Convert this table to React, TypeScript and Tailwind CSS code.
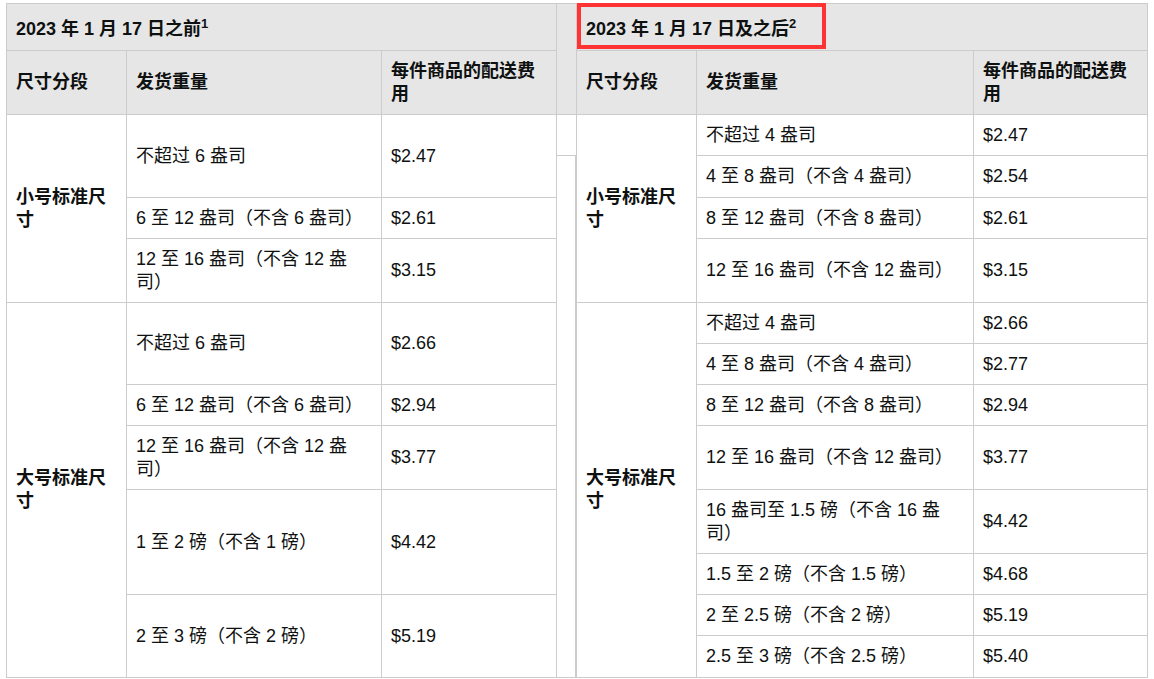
type Row = { weight: string; fee: string; h: number };
type Group = { name: string; rows: Row[] };

const font = { fontFamily: '"Liberation Sans", Arial, "Noto Sans CJK SC", sans-serif' };

const before: Group[] = [
  {
    name: "小号标准尺寸",
    rows: [
      { weight: "不超过 6 盎司", fee: "$2.47", h: 83 },
      { weight: "6 至 12 盎司（不含 6 盎司）", fee: "$2.61", h: 41 },
      { weight: "12 至 16 盎司（不含 12 盎司）", fee: "$3.15", h: 64 },
    ],
  },
  {
    name: "大号标准尺寸",
    rows: [
      { weight: "不超过 6 盎司", fee: "$2.66", h: 82 },
      { weight: "6 至 12 盎司（不含 6 盎司）", fee: "$2.94", h: 41 },
      { weight: "12 至 16 盎司（不含 12 盎司）", fee: "$3.77", h: 64 },
      { weight: "1 至 2 磅（不含 1 磅）", fee: "$4.42", h: 105 },
      { weight: "2 至 3 磅（不含 2 磅）", fee: "$5.19", h: 83 },
    ],
  },
];

const after: Group[] = [
  {
    name: "小号标准尺寸",
    rows: [
      { weight: "不超过 4 盎司", fee: "$2.47", h: 41 },
      { weight: "4 至 8 盎司（不含 4 盎司）", fee: "$2.54", h: 42 },
      { weight: "8 至 12 盎司（不含 8 盎司）", fee: "$2.61", h: 41 },
      { weight: "12 至 16 盎司（不含 12 盎司）", fee: "$3.15", h: 64 },
    ],
  },
  {
    name: "大号标准尺寸",
    rows: [
      { weight: "不超过 4 盎司", fee: "$2.66", h: 41 },
      { weight: "4 至 8 盎司（不含 4 盎司）", fee: "$2.77", h: 41 },
      { weight: "8 至 12 盎司（不含 8 盎司）", fee: "$2.94", h: 41 },
      { weight: "12 至 16 盎司（不含 12 盎司）", fee: "$3.77", h: 64 },
      { weight: "16 盎司至 1.5 磅（不含 16 盎司）", fee: "$4.42", h: 64 },
      { weight: "1.5 至 2 磅（不含 1.5 磅）", fee: "$4.68", h: 41 },
      { weight: "2 至 2.5 磅（不含 2 磅）", fee: "$5.19", h: 41 },
      { weight: "2.5 至 3 磅（不含 2.5 磅）", fee: "$5.40", h: 42 },
    ],
  },
];

const cell = "border-r border-b border-[#cccccc] flex items-center pl-[9px] pr-[10px]";

function FeeTable({
  title,
  note,
  groups,
  cols,
  highlight,
}: {
  title: string;
  note: string;
  groups: Group[];
  cols: [number, number, number];
  highlight?: boolean;
}) {
  const width = cols[0] + cols[1] + cols[2];
  return (
    <div style={{ width }} className="flex flex-col">
      {/* title row */}
      <div className={`${cell} relative h-[47px] pt-[4px] bg-[#e6e6e6] font-bold`}>
        <span>
          {title}
          <sup className="text-[13px]">{note}</sup>
        </span>
        {highlight && (
          <div className="absolute left-0 top-[-1px] w-[249px] h-[46px] border-[4px] border-[#ff3333]" />
        )}
      </div>

      {/* column heads */}
      <div className="flex h-[64px] bg-[#e6e6e6] font-bold">
        <div style={{ width: cols[0] }} className={cell}>尺寸分段</div>
        <div style={{ width: cols[1] }} className={cell}>发货重量</div>
        <div style={{ width: cols[2] }} className={cell}>每件商品的配送费用</div>
      </div>

      {groups.map((g) => (
        <div key={g.name} className="flex">
          <div style={{ width: cols[0] }} className={`${cell} font-bold`}>
            {g.name}
          </div>
          <div className="flex flex-col">
            {g.rows.map((r) => (
              <div key={r.weight} className="flex" style={{ height: r.h }}>
                <div style={{ width: cols[1] }} className={cell}>{r.weight}</div>
                <div style={{ width: cols[2] }} className={cell}>{r.fee}</div>
              </div>
            ))}
          </div>
        </div>
      ))}
    </div>
  );
}

export default function App() {
  return (
    <div style={font} className="w-[1154px] h-[679px] bg-white pt-[3px] pl-[6px] text-[18px] leading-[23px] text-[#0f1111]">
      <div className="flex w-fit border-t border-l border-[#cccccc]">
        <FeeTable title="2023 年 1 月 17 日之前" note="1" groups={before} cols={[120, 255, 175]} />

        {/* narrow spacer column */}
        <div className="flex w-[20px] flex-col">
          <div className="h-[111px] border-r border-b border-[#cccccc] bg-[#e6e6e6]" />
          <div className="h-[41px] border-r border-b border-[#cccccc]" />
          <div className="flex-1 border-r-2 border-b border-[#cccccc]" />
        </div>

        <FeeTable title="2023 年 1 月 17 日及之后" note="2" groups={after} cols={[120, 277, 174]} highlight />
      </div>
    </div>
  );
}
